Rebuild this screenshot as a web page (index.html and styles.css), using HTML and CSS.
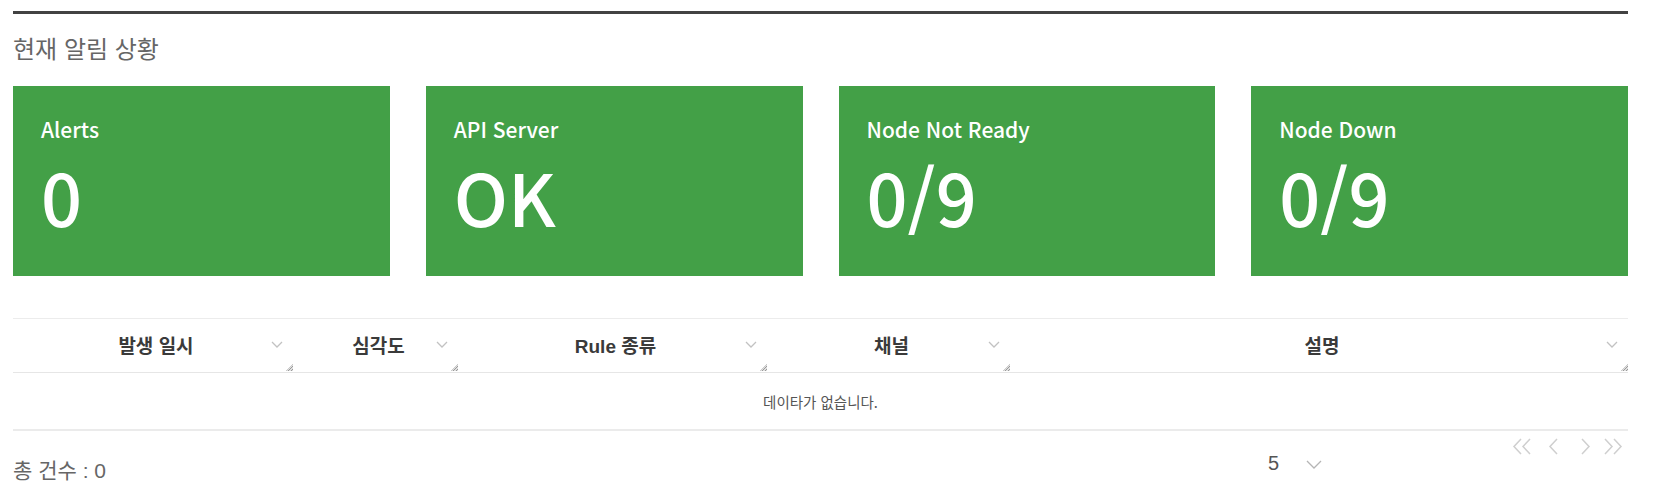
FILE: index.html
```html
<!DOCTYPE html>
<html lang="ko">
<head>
<meta charset="utf-8">
<title>현재 알림 상황</title>
<link rel="stylesheet" href="styles.css">
</head>
<body>
<div class="page">
  <section class="panel">
    <h2 class="title">현재 알림 상황</h2>

    <div class="cards">
      <div class="card">
        <div class="card-label">Alerts</div>
        <div class="card-value">0</div>
      </div>
      <div class="card">
        <div class="card-label">API Server</div>
        <div class="card-value">OK</div>
      </div>
      <div class="card">
        <div class="card-label">Node Not Ready</div>
        <div class="card-value">0/9</div>
      </div>
      <div class="card">
        <div class="card-label">Node Down</div>
        <div class="card-value">0/9</div>
      </div>
    </div>

    <div class="table">
      <div class="thead">
        <div class="th">
          <span class="th-text">발생 일시</span>
          <svg class="th-chev" width="12" height="7" viewBox="0 0 12 7"><path d="M1 1 L6 6 L11 1" /></svg>
          <span class="resize"></span>
        </div>
        <div class="th">
          <span class="th-text">심각도</span>
          <svg class="th-chev" width="12" height="7" viewBox="0 0 12 7"><path d="M1 1 L6 6 L11 1" /></svg>
          <span class="resize"></span>
        </div>
        <div class="th">
          <span class="th-text">Rule 종류</span>
          <svg class="th-chev" width="12" height="7" viewBox="0 0 12 7"><path d="M1 1 L6 6 L11 1" /></svg>
          <span class="resize"></span>
        </div>
        <div class="th">
          <span class="th-text">채널</span>
          <svg class="th-chev" width="12" height="7" viewBox="0 0 12 7"><path d="M1 1 L6 6 L11 1" /></svg>
          <span class="resize"></span>
        </div>
        <div class="th">
          <span class="th-text">설명</span>
          <svg class="th-chev" width="12" height="7" viewBox="0 0 12 7"><path d="M1 1 L6 6 L11 1" /></svg>
          <span class="resize"></span>
        </div>
      </div>
      <div class="empty">데이타가 없습니다.</div>
    </div>

    <div class="footer">
      <div class="total">총 건수 : 0</div>
      <div class="spacer"></div>
      <div class="page-size">
        <span class="page-size-value">5</span>
        <svg class="page-size-chev" width="16" height="9" viewBox="0 0 16 9"><path d="M1 1 L8 8 L15 1" /></svg>
      </div>
      <div class="pager">
        <svg class="pg pg-first" width="20" height="17" viewBox="0 0 20 17"><path d="M9 1 L2 8.5 L9 16 M18 1 L11 8.5 L18 16" /></svg>
        <svg class="pg pg-prev" width="12" height="17" viewBox="0 0 12 17"><path d="M10 1 L3 8.5 L10 16" /></svg>
        <svg class="pg pg-next" width="12" height="17" viewBox="0 0 12 17"><path d="M2 1 L9 8.5 L2 16" /></svg>
        <svg class="pg pg-last" width="20" height="17" viewBox="0 0 20 17"><path d="M2 1 L9 8.5 L2 16 M11 1 L18 8.5 L11 16" /></svg>
      </div>
    </div>
  </section>
</div>
</body>
</html>
```

FILE: styles.css
```css
html, body {
  margin: 0;
  padding: 0;
  background: #ffffff;
}

body {
  font-family: "Noto Sans CJK KR", "Noto Sans", sans-serif;
  color: #333;
}

.page {
  padding: 11px 27px 0 13px;
}

.panel {
  border-top: 3px solid #424242;
}

.title {
  margin: 19px 0 0 0;
  font-size: 24px;
  line-height: 30px;
  font-weight: 400;
  color: #666666;
}

.cards {
  display: grid;
  grid-template-columns: repeat(4, 1fr);
  gap: 36px;
  margin-top: 23px;
}

.card {
  background: #43a047;
  height: 190px;
  box-sizing: border-box;
  padding: 27px 28px 0 28px;
  color: #ffffff;
}

.card-label {
  font-family: "Noto Sans CJK KR", sans-serif;
  font-size: 21px;
  line-height: 32px;
  font-weight: 500;
}

.card-value {
  font-family: "Noto Sans CJK KR", sans-serif;
  font-size: 72px;
  line-height: 84px;
  font-weight: 500;
  margin-top: 9px;
}

.table {
  margin-top: 42px;
}

.thead {
  display: grid;
  grid-template-columns: 280px 165px 309px 243px 1fr;
  border-top: 1px solid #ececec;
  border-bottom: 1px solid #e6e6e6;
  height: 55px;
  box-sizing: border-box;
}

.th {
  position: relative;
  display: flex;
  align-items: center;
  padding: 0 10px 2px 28px;
}

.th-text {
  flex: 1;
  text-align: center;
  font-family: "Liberation Sans", "Noto Sans CJK KR", sans-serif;
  font-weight: 700;
  font-size: 19px;
  color: #3a3a3a;
}

.th-chev {
  flex: none;
  fill: none;
  stroke: #c2c2c2;
  stroke-width: 1.3;
}

.resize {
  position: absolute;
  right: 0;
  bottom: 1px;
  width: 7px;
  height: 7px;
  background: repeating-linear-gradient(135deg, #9a9a9a 0 1px, #e0e0e0 1px 2px);
  clip-path: polygon(100% 0, 100% 100%, 0 100%);
}

.empty {
  height: 56px;
  display: flex;
  align-items: center;
  justify-content: center;
  font-size: 14.5px;
  color: #555555;
  border-bottom: 2px solid #ebebeb;
}

.footer {
  display: flex;
  align-items: flex-start;
}

.total {
  margin-top: 28px;
  font-family: "Liberation Sans", "Noto Sans CJK KR", sans-serif;
  font-size: 21px;
  line-height: 24px;
  color: #666666;
}

.spacer {
  flex: 1;
}

.page-size {
  display: flex;
  align-items: center;
  margin-top: 20px;
  margin-right: 190px;
  height: 24px;
}

.page-size-value {
  font-family: "Liberation Sans", sans-serif;
  font-size: 20px;
  line-height: 24px;
  color: #555555;
}

.page-size-chev {
  margin-left: 27px;
  margin-top: 2px;
  fill: none;
  stroke: #b5b5b5;
  stroke-width: 1.3;
}

.pager {
  display: flex;
  align-items: center;
  margin-top: 7px;
  margin-right: 5px;
}

.pg {
  fill: none;
  stroke: #cfcfcf;
  stroke-width: 1.5;
}

.pg-prev {
  margin-left: 15px;
}

.pg-next {
  margin-left: 21px;
}

.pg-last {
  margin-left: 11px;
}
```
